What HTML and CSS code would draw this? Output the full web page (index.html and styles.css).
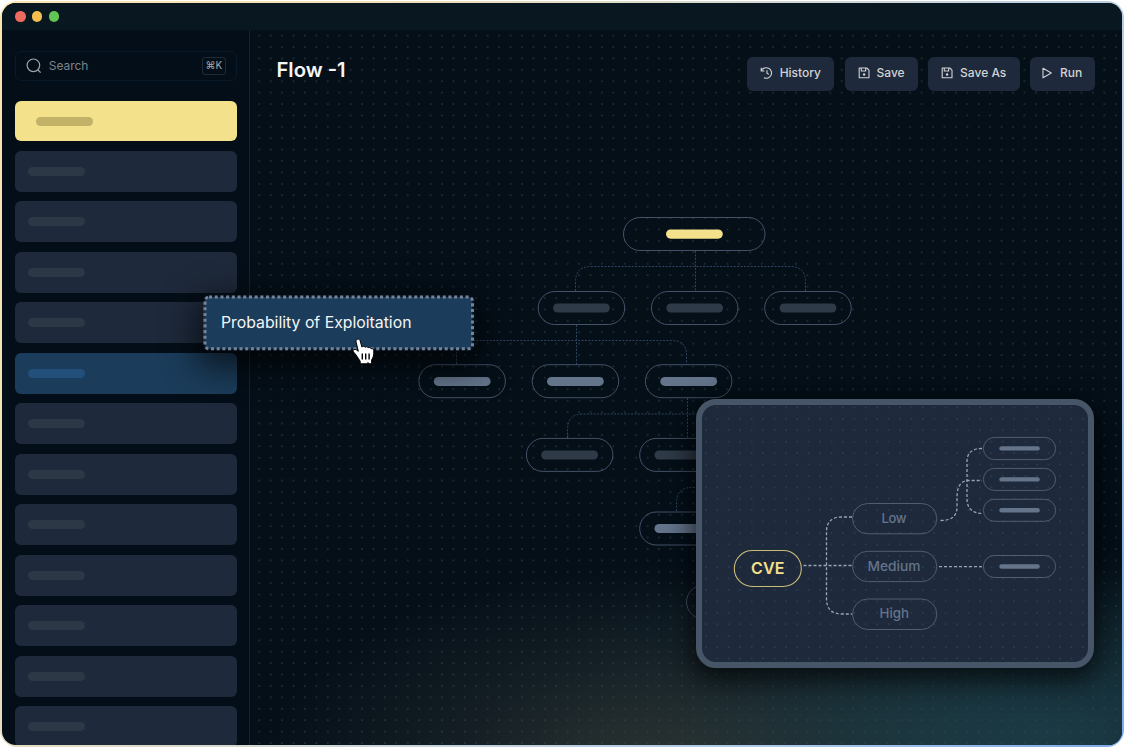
FILE: index.html
```html
<!DOCTYPE html>
<html lang="en">
<head>
<meta charset="utf-8">
<title>Flow -1</title>
<link rel="stylesheet" href="styles.css">
</head>
<body>
<div class="frame">
<div class="window">
  <header class="titlebar"><i class="light red"></i><i class="light amber"></i><i class="light green"></i></header>
  <div class="body">
    <aside class="sidebar">
      <div class="search">
        <svg class="search-icon" width="16" height="16" viewBox="0 0 16 16"><circle cx="7.4" cy="7.3" r="6.3"/><path d="M12 12l2.6 2.7"/></svg>
        <span class="search-label">Search</span>
        <kbd class="kbd">⌘K</kbd>
      </div>
      <ul class="items">
        <li class="item yellow"><i></i></li>
        <li class="item"><i></i></li>
        <li class="item"><i></i></li>
        <li class="item"><i></i></li>
        <li class="item"><i></i></li>
        <li class="item blue"><i></i></li>
        <li class="item"><i></i></li>
        <li class="item"><i></i></li>
        <li class="item"><i></i></li>
        <li class="item"><i></i></li>
        <li class="item"><i></i></li>
        <li class="item"><i></i></li>
        <li class="item"><i></i></li>
      </ul>
    </aside>
    <main class="main">
      <svg class="canvas" width="872" height="715" viewBox="250 30 872 715">
        <defs>
          <pattern id="dots" x="253.6" y="29.8" width="11.42" height="11.41" patternUnits="userSpaceOnUse"><circle class="dot" cx="5.7" cy="5.7" r=".8"/></pattern>
        </defs>
        <rect x="255" y="30" width="867" height="715" fill="url(#dots)"/>
        <g class="link">
          <path d="M695.5 251v40"/>
          <path d="M575.5 291v-9q0-15.5 15-15.5h200q15 0 15 15.5v9"/>
          <path d="M576.5 325v39"/>
          <path d="M456.5 364v-9q0-14.5 15-14.5h200q15 0 15 14.5v9"/>
          <path d="M687.5 398v40"/>
          <path d="M567.5 438v-8q0-16 15-16h200"/>
          <path d="M676.5 511v-8q0-15.5 15-15.5h90"/>
        </g>
        <g class="node">
          <rect x="623.5" y="217.5" width="141.5" height="33" rx="16.5"/>
          <rect x="538.2" y="291.5" width="86.5" height="33" rx="16.5"/>
          <rect x="651.4" y="291.5" width="86.5" height="33" rx="16.5"/>
          <rect x="764.7" y="291.5" width="86.5" height="33" rx="16.5"/>
          <rect x="418.9" y="364.7" width="86.5" height="33" rx="16.5"/>
          <rect x="532.2" y="364.7" width="86.5" height="33" rx="16.5"/>
          <rect x="645.4" y="364.7" width="86.5" height="33" rx="16.5"/>
          <rect x="526.4" y="438.4" width="86.5" height="33" rx="16.5"/>
          <rect x="639.7" y="438.4" width="86.5" height="33" rx="16.5"/>
          <rect x="639.7" y="512" width="86.5" height="33" rx="16.5"/>
          <rect x="686.5" y="585.5" width="86.5" height="33" rx="16.5"/>
        </g>
        <rect class="bar-yellow" x="666" y="229.5" width="56.8" height="9.2" rx="4.6"/>
        <g class="bar-dim">
          <rect x="553" y="303.5" width="56.8" height="9" rx="4.5"/>
          <rect x="666.3" y="303.5" width="56.8" height="9" rx="4.5"/>
          <rect x="779.6" y="303.5" width="56.8" height="9" rx="4.5"/>
          <rect x="541.2" y="450.5" width="56.8" height="9" rx="4.5"/>
          <rect x="654.5" y="450.5" width="56.8" height="9" rx="4.5"/>
        </g>
        <g class="bar-light">
          <rect x="433.8" y="376.9" width="56.8" height="9" rx="4.5"/>
          <rect x="547" y="376.9" width="56.8" height="9" rx="4.5"/>
          <rect x="660.3" y="376.9" width="56.8" height="9" rx="4.5"/>
          <rect x="654.5" y="524" width="56.8" height="9" rx="4.5"/>
        </g>
      </svg>
      <div class="topbar">
        <h1 class="title">Flow -1</h1>
        <div class="actions">
          <button class="btn"><svg width="14" height="14" viewBox="0 0 14 14"><path d="M1.2 1.8v3.200h3.200M1.500 4.600A5.300 5.300 0 1 1 4 11.800M7 4.200v3l2 1.200"/></svg><span>History</span></button>
          <button class="btn save"><svg width="14" height="14" viewBox="0 0 14 14"><path d="M2.200 2h7.600l2.200 2.200v7.600H2.200zM4.300 2v3h4.400V2"/><circle class="disk" cx="7.100" cy="8.500" r="1.200"/></svg><span>Save</span></button>
          <button class="btn saveas"><svg width="14" height="14" viewBox="0 0 14 14"><path d="M2.200 2h7.600l2.200 2.200v7.600H2.200zM4.300 2v3h4.400V2"/><circle class="disk" cx="7.100" cy="8.500" r="1.200"/></svg><span>Save As</span></button>
          <button class="btn run"><svg width="14" height="14" viewBox="0 0 14 14"><path d="M3 2.300v9.400l8.300-4.700z"/></svg><span>Run</span></button>
        </div>
      </div>
    </main>
  </div>
</div>
</div>

<div class="drag">
  <svg class="drag-box" width="272" height="56" viewBox="0 0 272 56"><rect x="2" y="2" width="267.5" height="51.8" rx="4"/></svg>
  <span class="drag-label">Probability of Exploitation</span>
  <svg class="hand" width="24" height="28" viewBox="0 0 24 28"><path d="M5.500 1.200c1.200-.4 2.300.3 2.700 1.600l1.700 6.300c.8-1.200 2.600-1 3.100.2.900-1 2.600-.7 3.100.5 1-.8 2.500-.3 2.900.9 1.400-.6 2.800.4 2.800 2.100 0 4.500-.3 6.500-2.200 9.200v3.800h-2.500l-1.100-1.300-1.100 1.300H8.200v-2.600C6.400 21.200 5.600 18.700 3.600 16.300 2.400 14.800.8 13.700 1.300 12.300c.6-1.500 2.700-1.200 5 1L4.100 4.100c-.4-1.300.2-2.500 1.400-2.900z"/><path class="fingers" d="M10.300 15.500v6M13.700 15.500v6M17.100 15.500v6"/></svg>
</div>

<section class="panel">
  <svg class="detail" width="386" height="257" viewBox="702 405 386 257">
    <defs><pattern id="pdots" x="700.2" y="401.7" width="11.42" height="11.41" patternUnits="userSpaceOnUse"><circle class="pdot" cx="5.7" cy="5.7" r=".8"/></pattern></defs>
    <rect x="702" y="405" width="386" height="257" fill="url(#pdots)"/>
    <g class="plink">
      <path d="M803.5 565.5H852"/>
      <path d="M852 517h-10q-15.500 0-15.500 14.500v67q0 15.500 15.500 15.500h10"/>
      <path d="M939 566.700h44"/>
      <path d="M940.500 520.500c11 0 16.500-4 16.500-14v-9q0-17 12-17h13"/>
      <path d="M982 448.500q-15 0-15 13v37q0 15 16 15"/>
    </g>
    <rect class="cve" x="734.3" y="550.5" width="67" height="36" rx="18"/>
    <g class="pnode">
      <rect x="852.5" y="503.5" width="84.3" height="30.3" rx="15.1"/>
      <rect x="852.5" y="551.3" width="84.3" height="30.3" rx="15.1"/>
      <rect x="852.5" y="599" width="84.3" height="30.5" rx="15.2"/>
      <rect x="983.4" y="437.4" width="72.2" height="22.2" rx="11.1"/>
      <rect x="983.4" y="468.4" width="72.2" height="22" rx="11"/>
      <rect x="983.4" y="499.3" width="72.2" height="22" rx="11"/>
      <rect x="983.4" y="555.5" width="72.2" height="22" rx="11"/>
    </g>
    <g class="bar-light">
      <rect x="999.3" y="446.2" width="40.5" height="4.400" rx="2.2"/>
      <rect x="999.3" y="477.2" width="40.5" height="4.400" rx="2.2"/>
      <rect x="999.3" y="508" width="40.5" height="4.400" rx="2.2"/>
      <rect x="999.3" y="564.3" width="40.5" height="4.400" rx="2.2"/>
    </g>
    <text class="cve-text" x="751" y="573.8" textLength="33.5">CVE</text>
    <text class="ptext" x="881.5" y="522.7" textLength="25">Low</text>
    <text class="ptext" x="867.5" y="570.7" textLength="53" lengthAdjust="spacingAndGlyphs">Medium</text>
    <text class="ptext" x="879.5" y="618.3" textLength="29.5" lengthAdjust="spacingAndGlyphs">High</text>
  </svg>
</section>
</body>
</html>
```
FILE: styles.css
```css
* { box-sizing: border-box; }
body { margin: 0; width: 1124px; height: 747px; overflow: hidden; background: #fff; font-family: Inter, "Liberation Sans", sans-serif; position: relative; }
.frame { height: 747px; padding: 2px 2px 2px; border-radius: 17px; background: linear-gradient(125deg, #fce5ae 0%, #f5e1b4 20%, #c9d4d9 55%, #a9c6ea 80%, #7fa9e8 100%); border-top: 1px solid #fff; }
.window { height: 742px; border-radius: 14px; overflow: hidden; background: #040e18; display: flex; flex-direction: column; }
.titlebar { height: 27px; flex: none; background: #091720; display: flex; align-items: center; gap: 6.5px; padding: 0 0 0 13.3px; }
.light { width: 10.3px; height: 10.3px; border-radius: 50%; }
.red { background: #ed6a5e; }
.amber { background: #f5bf4f; }
.green { background: #61c554; }
.body { flex: 1; display: flex; min-height: 0; }
.sidebar { width: 248px; flex: none; border-right: 1px solid #17222c; padding: 20.5px 12.5px 0 13.2px; overflow: hidden; }
.search { height: 30.5px; border: 1px solid #08192a; border-radius: 6px; display: flex; align-items: center; padding: 0 9.5px 0 9.8px; }
.search-icon { fill: none; stroke: #a0a4a8; stroke-width: 1.2; }
.search-label { margin-left: 6.8px; font-size: 12px; line-height: 16px; padding-top: 1px; letter-spacing: -.05px; color: #7d848b; }
.kbd { margin-left: auto; width: 24.5px; height: 17.5px; border: 1px solid #202a33; border-radius: 3px; font: 10px/15.5px Inter, "DejaVu Sans", sans-serif; color: #a3a7ab; text-align: center; }
.items { list-style: none; margin: 20px 0 0; padding: 0; display: flex; flex-direction: column; gap: 9.5px; }
.item { height: 41px; flex: none; border-radius: 6px; background: #1e293b; display: flex; align-items: center; padding-left: 13px; }
.item i { width: 57px; height: 9px; border-radius: 5px; background: #2c3845; }
.item.yellow { height: 40px; background: #f4e18b; padding-left: 20.5px; }
.item.yellow i { background: #c2b268; }
.item.blue { background: #1b3c5a; }
.item.blue i { background: #22507b; }
.main { flex: 1; position: relative; background: radial-gradient(ellipse 380px 170px at 800px 705px, rgba(28,61,72,.85), rgba(28,61,72,0)), radial-gradient(ellipse 400px 200px at 410px 735px, rgba(45,52,50,.95), rgba(44,53,54,.4) 50%, rgba(44,53,54,0)), radial-gradient(ellipse 500px 210px at 720px 720px, rgba(30,58,66,.75), rgba(28,61,72,0)), #040f18; }
.canvas { position: absolute; inset: 0; display: block; }
.dot { fill: #3a4750; fill-opacity: .9; }
.link path { fill: none; stroke: #304563; stroke-width: 1; stroke-dasharray: 2 1.4; }
.node rect { fill: none; stroke: #435268; stroke-width: 1; }
.bar-yellow { fill: #f4e18b; }
.bar-dim { fill: #2e3a48; }
.bar-light { fill: #64748b; }
.topbar { position: relative; display: flex; justify-content: space-between; padding: 27px 27px 0 26.5px; }
.title { margin: 0; font-size: 20.2px; line-height: 26px; font-weight: 600; color: #f5f5f5; }
.actions { display: flex; gap: 10.4px; }
.btn { width: 87.5px; height: 34px; display: flex; align-items: center; gap: 6px; padding: 0 0 3px 12.8px; border: 0; border-radius: 6px; background: #1e293b; color: #d2d3d5; font: 500 12px Inter, sans-serif; white-space: nowrap; }
.btn svg { flex: none; fill: none; stroke: #d2d3d5; stroke-width: 1.1; stroke-linejoin: round; }
.btn .disk { fill: #d2d3d5; stroke: none; }
.save { width: 73px; padding-left: 11.8px; }
.saveas { width: 91.5px; padding-left: 12px; }
.run { width: 65px; padding-left: 10px; }
.drag { position: absolute; left: 203px; top: 295px; width: 272px; height: 56px; border-radius: 6px; box-shadow: 0 10px 34px 6px rgba(0,0,0,.65); display: flex; align-items: center; }
.drag-box { position: absolute; inset: 0; }
.drag-box rect { fill: #1b3c5a; stroke: #75839a; stroke-width: 3; stroke-dasharray: 3.1 2.6; }
.drag-label { position: relative; margin-left: 18px; padding-bottom: 2px; font-size: 15.8px; color: #f4f5f6; white-space: nowrap; }
.hand { position: absolute; left: 149.3px; top: 42.5px; fill: #fff; stroke: #000; stroke-width: 1; }
.fingers { stroke-width: 1.4; }
.panel { position: absolute; left: 696px; top: 399px; width: 398px; height: 269px; border: 6px solid #475569; border-radius: 20px; background: #1e293b; box-shadow: 0 8px 28px 4px rgba(0,0,0,.7); overflow: hidden; }
.detail { display: block; }
.pdot { fill: #3b485b; }
.plink path { fill: none; stroke: #99a5b6; stroke-width: 1.3; stroke-dasharray: 3 2; }
.pnode rect { fill: none; stroke: #4f5e73; stroke-width: 1; }
.cve { fill: none; stroke: #c9bb79; stroke-width: 1.1; }
.cve-text { font-size: 16px; font-weight: 600; fill: #f4e18b; }
.ptext { font-size: 13px; fill: #64748b; font-weight: 500; }
```
